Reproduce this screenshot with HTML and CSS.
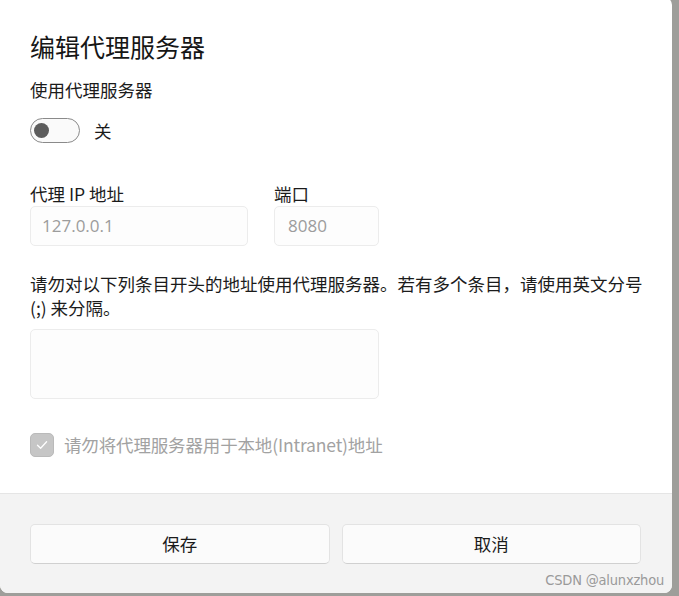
FILE: index.html
```html
<!DOCTYPE html>
<html lang="zh-CN">
<head>
<meta charset="utf-8">
<title>编辑代理服务器</title>
<link rel="stylesheet" href="styles.css">
</head>
<body>
<div class="dialog">
  <div class="content">
    <h1 class="title">编辑代理服务器</h1>
    <div class="label">使用代理服务器</div>
    <div class="toggle-row">
      <span class="toggle"><span class="knob"></span></span>
      <span class="toggle-text">关</span>
    </div>
    <div class="fields">
      <div class="field">
        <div class="label">代理 IP 地址</div>
        <div class="input input-ip">127.0.0.1</div>
      </div>
      <div class="field">
        <div class="label">端口</div>
        <div class="input input-port">8080</div>
      </div>
    </div>
    <div class="desc">请勿对以下列条目开头的地址使用代理服务器。若有多个条目，请使用英文分号 (;) 来分隔。</div>
    <div class="textarea"></div>
    <div class="check-row">
      <span class="checkbox">
        <svg width="14" height="14" viewBox="0 0 14 14"><path d="M2.5 7.3 L5.6 10.3 L11.6 3.8" fill="none" stroke="#ffffff" stroke-width="1.3" stroke-linecap="round" stroke-linejoin="round"/></svg>
      </span>
      <span class="check-text">请勿将代理服务器用于本地(Intranet)地址</span>
    </div>
  </div>
  <div class="footer">
    <button class="btn">保存</button>
    <button class="btn">取消</button>
    <span class="watermark">CSDN @alunxzhou</span>
  </div>
</div>
</body>
</html>
```

FILE: styles.css
```css
html, body {
  margin: 0;
  padding: 0;
}
body {
  width: 679px;
  height: 596px;
  overflow: hidden;
  background: #9e9e9a;
  font-family: "Noto Sans CJK SC", "Noto Sans", sans-serif;
  color: #1b1b1b;
}
.dialog {
  width: 672px;
  height: 596px;
  margin-top: -3px;
  background: #ffffff;
  border-radius: 0 8px 8px 8px;
  overflow: hidden;
  display: flex;
  flex-direction: column;
  position: relative;
}
.content {
  padding: 32px 24px 0 30px;
  height: 464px;
  display: flex;
  flex-direction: column;
  align-items: flex-start;
}
.title {
  margin: 0;
  font-size: 25px;
  font-weight: 400;
  line-height: 34px;
  color: #161616;
}
.label {
  font-size: 17.5px;
  line-height: 24px;
}
.content > .label {
  margin-top: 15px;
}
.toggle-row {
  margin-top: 16px;
  display: flex;
  align-items: center;
  height: 25px;
}
.toggle {
  width: 45px;
  height: 23px;
  border: 1px solid #8a8a8a;
  border-radius: 13px;
  background: #fafafa;
  display: flex;
  align-items: center;
  padding-left: 3px;
  box-sizing: content-box;
}
.knob {
  width: 15px;
  height: 15px;
  border-radius: 50%;
  background: #5d5d5d;
}
.toggle-text {
  margin-left: 14px;
  font-size: 17.5px;
  line-height: 24px;
}
.fields {
  margin-top: 39px;
  display: flex;
  gap: 26px;
}
.input {
  box-sizing: border-box;
  height: 40px;
  border: 1px solid #ececec;
  border-radius: 5px;
  background: #fdfdfd;
  color: #9c9c9c;
  font-family: "Open Sans", "Noto Sans", sans-serif;
  font-size: 17px;
  line-height: 38px;
  padding-left: 11px;
}
.input-ip { width: 218px; }
.input-port { width: 105px; padding-left: 13px; }
.desc {
  margin-top: 26px;
  font-size: 17.5px;
  line-height: 24px;
  width: 618px;
}
.textarea {
  margin-top: 9px;
  box-sizing: border-box;
  width: 349px;
  height: 70px;
  border: 1px solid #ececec;
  border-radius: 5px;
  background: #fdfdfd;
}
.check-row {
  margin-top: 33px;
  display: flex;
  align-items: center;
  height: 25px;
}
.checkbox {
  box-sizing: border-box;
  width: 24px;
  height: 24px;
  border-radius: 5px;
  background: #c6c6c6;
  border: 1px solid #bababa;
  display: flex;
  align-items: center;
  justify-content: center;
}
.check-text {
  margin-left: 10px;
  font-size: 17.5px;
  line-height: 24px;
  color: #a2a2a2;
  letter-spacing: -0.15px;
}
.footer {
  flex: 1;
  background: #f3f3f3;
  border-top: 1px solid #e5e5e5;
  box-sizing: border-box;
  display: flex;
  gap: 12px;
  padding: 30px 31px 0 30px;
  align-items: flex-start;
  position: relative;
}
.btn {
  flex: 1;
  height: 40px;
  box-sizing: border-box;
  border: 1px solid #e3e3e3;
  border-bottom-color: #d0d0d0;
  border-radius: 5px;
  background: #fbfbfb;
  font-family: "Noto Sans CJK SC", sans-serif;
  font-size: 17.5px;
  color: #1b1b1b;
  padding: 0;
  line-height: 38px;
}
.watermark {
  position: absolute;
  right: 8px;
  bottom: 5px;
  font-family: "DejaVu Sans Condensed", "Liberation Sans", sans-serif;
  font-size: 14.5px;
  color: #9a9a9a;
  letter-spacing: -0.2px;
}
```
